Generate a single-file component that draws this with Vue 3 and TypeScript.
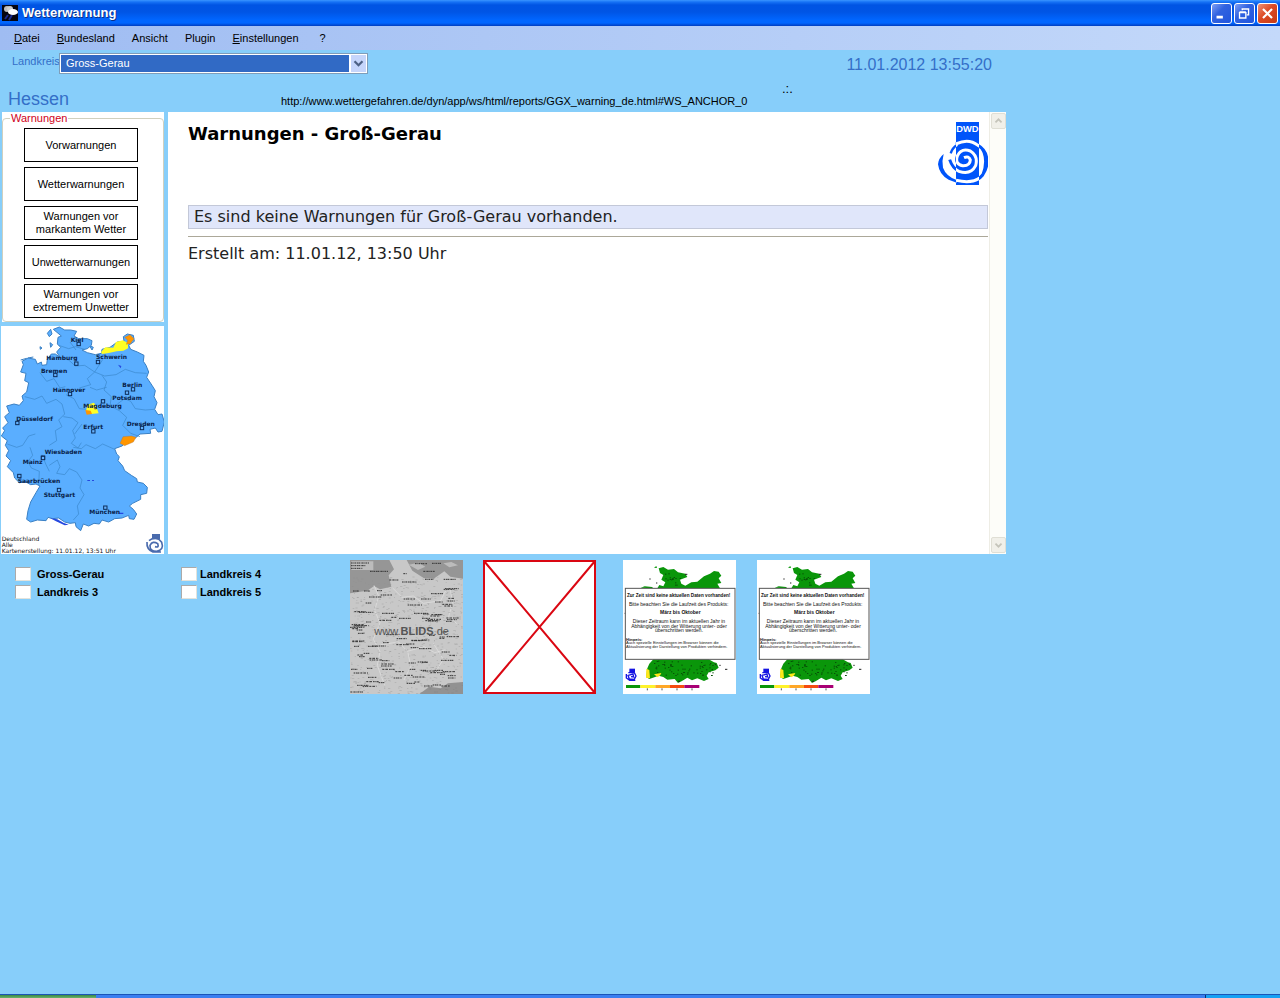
<script setup lang="ts">
import { ref } from 'vue'

const menu = [
  { key: 'D', rest: 'atei' },
  { key: 'B', rest: 'undesland' },
  { key: '', rest: 'Ansicht' },
  { key: '', rest: 'Plugin' },
  { key: 'E', rest: 'instellungen' },
  { key: '', rest: '?' }
]
const levels = [
  'Vorwarnungen',
  'Wetterwarnungen',
  'Warnungen vor markantem Wetter',
  'Unwetterwarnungen',
  'Warnungen vor extremem Unwetter'
]
const district = ref('Gross-Gerau')
const watchColumns = [['Gross-Gerau', 'Landkreis 3'], ['Landkreis 4', 'Landkreis 5']]

interface City { name: string; x: number; y: number; mx: number; my: number }
const cities: City[] = [
  { name: 'Kiel', x: 212, y: 60, mx: 236, my: 66 },
  { name: 'Hamburg', x: 139, y: 114, mx: 229, my: 125 },
  { name: 'Schwerin', x: 288, y: 112, mx: 294, my: 120 },
  { name: 'Bremen', x: 123, y: 152, mx: 166, my: 159 },
  { name: 'Berlin', x: 367, y: 195, mx: 399, my: 202 },
  { name: 'Hannover', x: 158, y: 209, mx: 210, my: 216 },
  { name: 'Potsdam', x: 337, y: 233, mx: 381, my: 212 },
  { name: 'Magdeburg', x: 250, y: 259, mx: 309, my: 238 },
  { name: 'Düsseldorf', x: 49, y: 297, mx: 52, my: 303 },
  { name: 'Dresden', x: 380, y: 311, mx: 426, my: 318 },
  { name: 'Erfurt', x: 250, y: 322, mx: 280, my: 328 },
  { name: 'Wiesbaden', x: 134, y: 397, mx: 129, my: 407 },
  { name: 'Mainz', x: 68, y: 427, mx: 129, my: 408 },
  { name: 'Saarbrücken', x: 53, y: 483, mx: 58, my: 462 },
  { name: 'Stuttgart', x: 131, y: 525, mx: 177, my: 504 },
  { name: 'München', x: 268, y: 577, mx: 316, my: 557 }
]

let seed = 41
const rand = () => {
  seed = (seed * 16807) % 2147483647
  return seed / 2147483647
}
interface Mark { x: number; y: number; w: number }
const placeMarks: Mark[] = Array.from({ length: 105 }, () => ({
  x: Math.floor(rand() * 300),
  y: 85 + Math.floor(rand() * 300),
  w: 14 + Math.floor(rand() * 30)
}))
const speckles: Mark[] = Array.from({ length: 650 }, () => ({
  x: Math.floor(rand() * 336),
  y: 50 + Math.floor(rand() * 350),
  w: 3 + Math.floor(rand() * 5)
}))
const stations: Mark[] = Array.from({ length: 80 }, () => ({
  x: 130 + Math.floor(rand() * 180),
  y: 40 + Math.floor(rand() * 320),
  w: 4
}))
const seasonMaps = ['Gewitter', 'Hitze']
</script>

<template>
  <div class="app">
    <header class="titlebar">
      <svg class="app-icon" viewBox="0 0 16 16" aria-hidden="true">
        <rect width="16" height="16" fill="#050510" />
        <path d="M3 14l3-4M7 15l3-5" stroke="#1a2a90" stroke-width="2" />
        <circle cx="5" cy="4" r="3" fill="#bdbdbd" /><circle cx="8" cy="4" r="3" fill="#cfcfcf" />
        <ellipse cx="11" cy="7" rx="5" ry="3" fill="#fff" />
      </svg>
      <h1>Wetterwarnung</h1>
      <div class="window-buttons">
        <button type="button" aria-label="Minimieren"><svg viewBox="0 0 21 21"><path d="M5 14.500h7" stroke="#fff" stroke-width="3" /></svg></button>
        <button type="button" aria-label="Wiederherstellen"><svg viewBox="0 0 21 21" fill="none" stroke="#fff"><path d="M8 7V5.500h7V12h-2" stroke-width="1.500" /><path d="M5 9.500h7v6H5z" stroke-width="1.500" /><path d="M5 9h7" stroke-width="2" /></svg></button>
        <button type="button" class="close" aria-label="Schließen"><svg viewBox="0 0 21 21"><path d="M5.500 5.500l10 10M15.500 5.500l-10 10" stroke="#fff" stroke-width="2.400" /></svg></button>
      </div>
    </header>

    <nav class="menu">
      <button v-for="m in menu" :key="m.rest" type="button"><u>{{ m.key }}</u>{{ m.rest }}</button>
    </nav>

    <main class="content">
      <div class="toolbar">
        <label for="district">Landkreis</label>
        <span class="combo">
          <select id="district" v-model="district"><option>Gross-Gerau</option></select>
          <svg viewBox="0 0 17 17" aria-hidden="true"><path d="M4 6l4.500 4.500L13 6" fill="none" stroke="#4d6185" stroke-width="2.500" /></svg>
        </span>
        <time datetime="2012-01-11T13:55:20">11.01.2012 13:55:20</time>
      </div>
      <div class="location">
        <h2>Hessen</h2>
        <span class="url">http://www.wettergefahren.de/dyn/app/ws/html/reports/GGX_warning_de.html#WS_ANCHOR_0</span>
        <span class="progress">.:.</span>
      </div>

      <div class="columns">
        <aside>
          <div class="levels">
            <fieldset>
              <legend>Warnungen</legend>
              <button v-for="l in levels" :key="l" type="button">{{ l }}</button>
            </fieldset>
          </div>
          <svg class="warn-map" viewBox="3 12 489 684" role="img" aria-label="Warnkarte Deutschland">
            <rect x="3" y="12" width="489" height="684" fill="#fff" />
            <g fill="#5aaeff" stroke="#3a80c4" stroke-width="3" stroke-linejoin="round">
              <path d="M142 34l10-12 4 14-8 8zM120 74l6 4-5 4zM150 62l8 6-6 8zM268 70l12 6-4 8zM62 114l18-5M84 108l16-3" />
              <path d="M160 22L178 15 194 24 212 24 230 28 222 42 236 50 262 50 276 56 274 70 262 80 246 84 262 92 286 98 304 94 306 82 330 76 352 60 372 58 370 44 382 36 400 40 403 58 386 70 392 82 412 90 432 100 430 118 438 130 446 150 440 166 456 190 466 206 462 224 471 242 464 262 474 278 486 276 493 300 486 328 474 330 466 318 450 322 452 334 420 336 406 348 386 354 366 372 344 380 350 396 358 404 354 416 368 432 374 446 394 460 410 470 412 480 430 484 442 496 440 514 422 518 422 532 398 544 388 552 400 562 410 576 402 592 388 590 386 580 366 588 344 590 326 600 306 594 298 606 282 604 266 612 250 606 242 626 228 614 226 602 210 604 194 600 176 588 158 590 144 586 138 596 112 594 92 600 80 592 84 566 92 540 108 512 120 492 108 486 92 488 78 480 58 482 44 468 40 452 22 434 32 416 18 402 26 386 16 370 22 356 4 342 14 326 8 318 24 302 14 284 28 272 20 252 42 246 58 250 70 236 66 222 80 210 86 182 74 176 78 154 62 150 70 128 66 118 84 108 106 112 112 126 124 120 126 130 140 128 142 112 154 96 166 96 180 106 170 90 182 76 172 66 174 46 184 42z" />
            </g>
            <g fill="none" stroke="#3986ca" stroke-width="2">
              <path d="M176 70l30 10 20-6 28 8M180 106l26 8 20 18 28-2 30 20 22-34 4-20M284 150l-22 20 10 18-34 10M284 150l30 12 34-4 28-16 30 10 34 2M306 160l14 20-8 24 22 20-4 28 28 14 22 20-12 24 24 24 28 10M74 224l30 8 22-10 14 22 28-12 18 14 8 30-18 18 10 20-20 12 4 30-22 14M190 284l26 4 18 14-16 24 8 22-12 16 20 14 10-16M220 376l24 4 14-12 28 12 22-14 36 16M22 366l28 10 18-6 18-28 20-6M90 376l8 24-14 18 10 20 24 10-2 42M148 430l24-16 8 20-10 20 24 4 14-18 22 10 16 24-6 24 12 20-20 34 4 24-16 18M126 398l12 30 10 20M210 60l18 24M352 246l22-16 18 8 14 22 30 4 26-2M120 152l20 26 22-8 18 28 16-4M320 196l-30 8-20-8M246 306l-22 30M262 262l-24-2-16-30-24-12" />
            </g>
            <path fill="#ffff24" d="M303 90l13-14 24 1 8-17 20-5 16 8v16l-14 7-20 2-24 5-20 3z" />
            <path fill="#ff9600" stroke="#a06c48" d="M374 46l16-8 12 12-11 15-12 2 4-12zM360 364l9-20 25-2 14 4-8 14-26 11z" />
            <path fill="#ffff24" d="M262 248l20-6 6 10 8 22-22 2-16-8z" />
            <path fill="#ff9600" d="M256 264l16 2 4 10-16 2z" />
            <path fill="#2548df" d="M150 588l22 4 18 10 16 6-12 2-26-12zM354 128l10 4-2 7zM356 572h14v4h-14zM262 474h8v3h-8M276 474h6v3h-6" />
            <g v-for="c in cities" :key="c.name">
              <rect :x="c.mx - 5" :y="c.my - 5" width="10" height="10" fill="#65b2ff" stroke="#0c2c58" stroke-width="3" />
              <text class="city" :x="c.x" :y="c.y">{{ c.name }}</text>
            </g>
            <g class="map-caption"><text x="5" y="656">Deutschland</text><text x="5" y="674">Alle</text><text x="5" y="694">Kartenerstellung: 11.01.12, 13:51 Uhr</text></g>
            <g fill="none" stroke="#4a6bad" stroke-width="5">
              <path fill="#4a6bad" stroke="none" d="M456 636h24v16h-24z" /><path d="M441 660q-2 22 18 30h24M447 656q22-17 38 5 8 23-15 27-21 0-20-18 8-15 23-5 5 13-8 9" />
            </g>
          </svg>
        </aside>

        <section class="browser">
          <article>
            <div class="report-head">
              <h3>Warnungen - Groß-Gerau</h3>
              <svg class="dwd" viewBox="534 216 150 189" role="img" aria-label="DWD">
                <defs>
                  <clipPath id="dwd-bar"><rect x="588" y="216" width="69" height="189" /></clipPath>
                  <g id="dwd-swirl" fill="none">
                    <path stroke-width="9" d="M588 282C612 270 636 272 654 286C686 304 688 346 668 375C652 396 620 398 588 391" />
                    <path fill="currentColor" stroke="none" d="M551 312Q535 325 534 343Q538 375 566 389L590 398L588 389Q558 378 549 353Q545 333 551 312z" />
                    <path fill="currentColor" stroke="none" d="M657 286Q685 305 684 338Q680 370 656 386L665 372Q678 336 668 309z" />
                    <path stroke-width="9" d="M569 329Q577 354 597 364Q632 376 647 347Q655 318 631 303Q604 293 592 318Q584 342 608 347Q630 348 631 330Q627 316 612 323" />
                    <path stroke-width="7" d="M572 310Q577 293 592 284" />
                  </g>
                </defs>
                <use href="#dwd-swirl" color="#0054fa" stroke="#0054fa" />
                <rect x="588" y="216" width="69" height="189" fill="#0054fa" />
                <g clip-path="url(#dwd-bar)"><use href="#dwd-swirl" color="#fff" stroke="#fff" /></g>
                <text x="622" y="247" text-anchor="middle" fill="#fff" class="dwd-name">DWD</text>
              </svg>
            </div>
            <p class="notice">Es sind keine Warnungen für Groß-Gerau vorhanden.</p>
            <hr>
            <p class="created">Erstellt am: 11.01.12, 13:50 Uhr</p>
          </article>
          <div class="scrollbar">
            <button type="button" aria-label="Nach oben"><svg viewBox="0 0 15 15"><path d="M4 9l3.500-3.500L11 9" /></svg></button>
            <button type="button" aria-label="Nach unten"><svg viewBox="0 0 15 15"><path d="M4 6l3.500 3.500L11 6" /></svg></button>
          </div>
        </section>
      </div>

      <div class="bottom">
        <div class="watch">
          <div v-for="col in watchColumns" :key="col[0]">
            <label v-for="w in col" :key="w"><input type="checkbox">{{ w }}</label>
          </div>
        </div>
        <div class="thumbs">
          <svg class="thumb" viewBox="0 0 339 402" role="img" aria-label="Blitzkarte">
            <rect width="339" height="402" fill="#c8c8c8" />
            <path fill="#969696" d="M0 0h118l14 28-16 18 8 34-34 8-18-10-20 14-52 8zM170 0h169v56l-38-6-18-16-32 22-30-2-34-22z" />
            <path fill="#bcbcbc" d="M4 4h66v26H4zM176 14l30-6 20 12-22 10zM280 10l24-4 20 10-26 6z" />
            <g fill="none" stroke="#e3e3e3" stroke-width="2"><path d="M72 76l14 32-12 44 16 36-20 50 20 36-8 42 22 60M128 84l28 28 34-4 30 22 52-8 20-40M300 86l8 42-12 42 26 22M92 254l54-8 26 28 50-14 32 18 38-10M174 278l8 42-20 40M250 250l30 48-26 42" /></g>
            <g fill="#929292"><rect v-for="(s, i) in speckles" :key="i" :x="s.x" :y="s.y" :width="s.w" height="2" opacity=".5" /></g>
            <path fill="#666" opacity=".55" d="M208 402l30-22 34 5 22-15 45-4v36z" />
            <g stroke="#333" stroke-width="3" stroke-dasharray="5 2 3 1 6 3"><path v-for="(p, i) in placeMarks" :key="i" :d="`M${p.x} ${p.y}h${p.w}`" /></g>
            <g stroke="#333" stroke-width="3" stroke-dasharray="5 2 3 1"><path d="M60 34h54M3 9h54M3 17h44M3 25h34M118 60h28M156 66h44M220 34h35M195 11h36M281 58h36M1 396h40M160 41h10M246 10h28M225 58h25" /></g>
            <text x="73" y="225" class="blids">www.<tspan font-weight="bold">BLIDS</tspan>.de</text>
          </svg>
          <svg class="thumb" viewBox="0 0 113 134" role="img" aria-label="Bild nicht verfügbar">
            <rect x="1" y="1" width="111" height="132" fill="#fff" stroke="#da0712" stroke-width="2" /><path d="M1 1l111 132M112 1L1 133" stroke="#da0712" stroke-width="2" />
          </svg>
        </div>
        <div class="thumbs">
          <svg v-for="m in seasonMaps" :key="m" class="thumb" viewBox="39 15 339 402" role="img" :aria-label="m">
            <rect x="39" y="15" width="339" height="402" fill="#fff" />
            <path fill="#0a960a" d="M146 40L160 36 174 44 192 42 204 52 226 56 232 66 210 74 214 86 226 92 244 82 262 80 282 64 300 56 312 48 326 50 334 62 326 70 334 84 322 86 330 100H142L148 90 160 94 166 82 154 74 160 60 150 54zM92 98l12-4 22 2 4 4zM132 38l7-5 2 6z" />
            <path fill="#0a960a" d="M130 313H296L312 322 320 324 326 338 316 346 296 352 290 362 296 372 282 378 262 370 246 376 232 368 216 378 204 384 194 372 172 374 160 366 146 362 118 372 108 366 112 340 118 326z" />
            <path fill="#ffe71a" d="M109 341l9 4 2 25-12-2zM132 358l22-4-3 6-8 7z" />
            <g fill="#075007"><rect v-for="(s, i) in stations" :key="i" :x="s.y > 100 ? s.x : 160 + s.x % 60" :y="s.y > 100 ? 316 + s.y % 45 : 55 + s.y % 40" width="4" height="3" /></g>
            <path stroke="#222" stroke-width="3" d="M118 72h4M138 84h4M44 175h3M314 326l5 5M328 331h4M345 343h7M204 379h6M225 58h7" />
            <rect x="46" y="100" width="329" height="213" fill="#fff" stroke="#555" stroke-width="3" />
            <g class="season">
              <text x="206" y="126" class="season-title">Zur Zeit sind keine aktuellen Daten vorhanden!</text>
              <text x="206" y="152">Bitte beachten Sie die Laufzeit des Produkts:</text>
              <text x="211" y="178" font-weight="bold">März bis Oktober</text>
              <text x="207" y="205">Dieser Zeitraum kann im aktuellen Jahr in</text>
              <text x="207" y="218">Abhängigkeit von der Witterung unter- oder</text>
              <text x="207" y="231">überschritten werden.</text>
              <g class="note"><text x="48" y="257" font-weight="bold">Hinweis:</text><text x="48" y="268">Auch spezielle Einstellungen im Browser können die</text><text x="48" y="279">Aktualisierung der Darstellung von Produkten verhindern.</text></g>
            </g>
            <g fill="none" stroke="#1514e2" stroke-width="4"><path fill="#1514e2" stroke="none" d="M58 341h17v10H58z" /><path d="M49 357v12l10 7h17M55 353h18l5 10-5 10-15-1-4-11 15-4 2 9-8-1" /></g>
            <path fill="#0a960a" d="M48 390h43v9H48z" /><path fill="#fff22b" d="M91 390h45v9H91z" /><path fill="#ffa727" d="M136 390h44v9h-44z" /><path fill="#f54b10" d="M180 390h43v9h-43z" /><path fill="#a80074" d="M223 390h45v9h-45z" />
            <path stroke="#555" stroke-width="3" d="M112 400v6M156 400v6M201 400v6M246 400v6" />
          </svg>
        </div>
      </div>
    </main>

    <footer class="taskbar"><span class="start"></span><span class="tasks"></span><span class="tray"></span></footer>
  </div>
</template>

<style>
body { margin: 0; }
</style>

<style scoped>
* { box-sizing: border-box; }
.app { min-height: 100vh; display: flex; flex-direction: column; background: #87cefa; font: 11px/13px "Liberation Sans", Arial, sans-serif; color: #000; }
button { font: inherit; color: inherit; padding: 0; }
h1, h2, h3, p { margin: 0; }
svg { display: block; }
.titlebar { height: 26px; display: flex; align-items: center; padding: 0 2px; background: linear-gradient(#3a95ff 0, #1672f5 2px, #0054e3 5px, #0055e5 12px, #0066ff 20px, #0066ff 23px, #003dc0 26px); }
.app-icon { width: 16px; height: 16px; margin-right: 4px; }
h1 { flex: 1; font-size: 13px; line-height: 16px; color: #fff; text-shadow: 1px 1px #0a2f86; }
.window-buttons { display: flex; gap: 2px; }
.window-buttons button { width: 21px; height: 21px; border: 1px solid #fff; border-radius: 3px; background: linear-gradient(135deg, #7f9ff5, #3163e0 40%, #2155dd); overflow: hidden; }
.window-buttons .close { background: linear-gradient(135deg, #ee9276, #dc4a24 45%, #c63a13); }
.window-buttons svg { width: 19px; height: 19px; }
.menu { height: 24px; display: flex; align-items: center; gap: 17px; padding: 0 14px; background: linear-gradient(90deg, #9fbcf2, #c4d9fa); }
.menu button { border: 0; background: none; }
.menu button:last-child { margin-left: 4px; }
.content { flex: 1; max-width: 1006px; }
.toolbar { display: flex; align-items: flex-start; height: 35px; padding: 3px 14px 0 12px; color: #346fc8; }
.toolbar label { width: 47px; padding-top: 2px; line-height: 13px; }
.combo { position: relative; width: 309px; }
.combo select { display: block; width: 100%; height: 21px; appearance: none; border: 1px solid #7f9db9; border-radius: 0; padding: 0 20px 0 6px; font: inherit; color: #fff; background: #316ac5; box-shadow: inset 0 0 0 1px #fff; outline: 0; }
.combo svg { position: absolute; top: 1px; right: 1px; width: 18px; height: 19px; background: #c5d5fb; border: 1px solid #fff; border-left-width: 2px; pointer-events: none; }
time { margin-left: auto; font-size: 16px; line-height: 24px; }
.location { display: flex; height: 27px; align-items: flex-start; padding-left: 8px; }
h2 { width: 273px; padding-top: 4px; font-size: 18px; line-height: 20px; font-weight: 400; color: #346fc8; }
.url { width: 501px; padding-top: 10px; }
.progress { font-size: 13px; line-height: 8px; }
.columns { display: flex; gap: 4px; align-items: stretch; }
aside { flex: 0 0 164px; display: flex; flex-direction: column; gap: 4px; }
.levels { margin-left: 2px; background: #fff; height: 210px; }
fieldset { height: 210px; margin: 0; border: 1px solid #d0d0bf; border-radius: 4px; padding: 3px 25px 4px 21px; display: flex; flex-direction: column; gap: 5px; }
legend { margin-left: -14px; padding: 0 1px; color: #d00020; }
fieldset button { width: 114px; height: 34px; flex: none; border: 1px solid #000; background: #fff; padding: 0 4px; white-space: normal; }
.warn-map { width: 163px; height: 228px; margin-left: 1px; }
.city { font: bold 18px "DejaVu Sans", sans-serif; fill: #08224a; }
.map-caption { font: 18px "DejaVu Sans", sans-serif; fill: #111; }
.browser { flex: 1; min-width: 0; display: flex; background: #fff; }
article { flex: 1; padding: 10px 1px 0 20px; font: 16px/22px "DejaVu Sans", Verdana, sans-serif; }
.report-head { display: flex; justify-content: space-between; height: 83px; }
h3 { font-size: 18px; line-height: 24px; }
.dwd { width: 50px; height: 63px; }
.dwd-name { font: bold 28px "Liberation Sans", sans-serif; }
.notice { height: 24px; padding: 0 5px; border: 1px solid #c3c8d8; background: #e0e6fa; color: #222; }
.created { color: #222; }
hr { margin: 7px 0 6px; border: 0; border-top: 1px solid #aca899; }
.scrollbar { width: 17px; padding: 1px; background: #fdfdf9; border-left: 1px solid #eeede5; display: flex; flex-direction: column; justify-content: space-between; }
.scrollbar button { width: 15px; height: 16px; border: 1px solid #e0dfd5; border-radius: 2px; background: #f1f0e9; }
.scrollbar svg { width: 13px; height: 14px; fill: none; stroke: #c5c4ba; stroke-width: 2; }
.bottom { display: flex; padding-top: 6px; }
.watch { flex: 0 0 350px; display: flex; padding: 6px 0 0 15px; font-weight: bold; }
.watch > div { width: 166px; display: flex; flex-direction: column; gap: 2px; }
.watch label { display: flex; align-items: center; gap: 6px; height: 16px; }
.watch > div + div label { gap: 3px; }
.watch input { appearance: none; width: 16px; height: 14px; margin: 0; background: #fff; border: 1px solid #e3e3dc; border-top-color: #aaa; border-left-color: #aaa; }
.watch input:checked { background: #316ac5; }
.thumbs { display: flex; gap: 20px; }
.thumbs + .thumbs { margin-left: 27px; gap: 21px; }
.thumb { width: 113px; height: 134px; }
.blids { font: 33px "Liberation Sans", sans-serif; fill: #555; }
.season { font: 15px "Liberation Sans", sans-serif; fill: #111; text-anchor: middle; }
.season-title { font-size: 14px; font-weight: bold; }
.note { font-size: 12px; text-anchor: start; }
.taskbar { height: 4px; display: flex; background: #2b62d9; border-top: 1px solid #1b55b8; }
.start { width: 96px; background: linear-gradient(#398647, #6ab56b); }
.tasks { flex: 1; background: #3b7ff0; }
.tray { width: 75px; background: #17a0f3; border-left: 1px solid #0b2e73; }
</style>
